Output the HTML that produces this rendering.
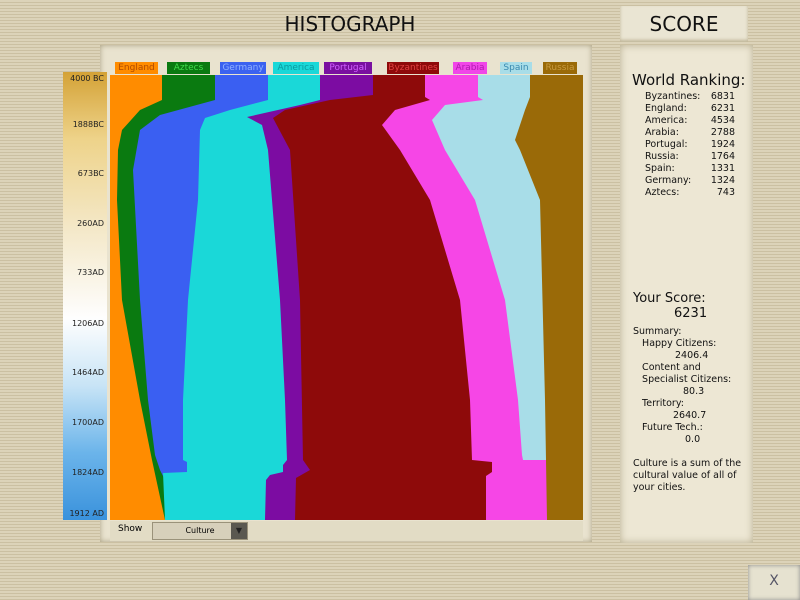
<!DOCTYPE html>
<html><head><style>
*{margin:0;padding:0;box-sizing:border-box}
body{width:800px;height:600px;overflow:hidden;position:relative;background:#d6ccb0;background-image:repeating-linear-gradient(0deg,#cbc0a2 0 1px,#dcd3b9 1px 3px);font-family:"DejaVu Sans","Liberation Sans",sans-serif}
.abs{position:absolute}
.title{left:240px;top:12px;width:220px;text-align:center;font-size:20px;color:#111}
.scorehd{left:620px;top:6px;width:128px;height:36px;background:#eae5d3;text-align:center;font-size:20px;line-height:36px;color:#111;box-shadow:inset 0 -2px 3px #bfb597}
.frame{left:100px;top:45px;width:492px;height:497px;background:#e9e3cf;box-shadow:inset 0 0 6px #a89e80}
.tl{left:63px;top:72px;width:44px;height:448px;background:linear-gradient(#d4a236 0%,#eed38a 15%,#f4e8c8 35%,#fefefe 55%,#c8e4f6 70%,#6bb4ea 85%,#3a92dc 100%)}
.tl span{position:absolute;right:3px;font-size:8px;color:#222}
.tab{position:absolute;top:62px;font-size:9px;height:12px;line-height:12px;width:43px;text-align:center;overflow:hidden;white-space:nowrap}
.rp{left:620px;top:45px;width:133px;height:498px;background:#ede7d4;box-shadow:inset 0 0 8px #b6ad8f;font-size:10px;color:#111}
.rk{position:absolute;left:25px;font-size:9.5px;width:90px}
.rk b{font-weight:normal;position:absolute;right:0}
.show{left:110px;top:521px;width:473px;height:20px;background:#e2dcc5}
.sel{left:152px;top:522px;width:96px;height:18px;background:#d7d0bb;border:1px solid #9a927a;font-size:8px;text-align:center;line-height:16px}
.x{left:748px;top:565px;width:52px;height:35px;background:#e6e2d0;box-shadow:inset 0 0 4px #888;text-align:center;line-height:32px;font-size:14px;color:#556}
</style></head><body>
<div class="abs title">HISTOGRAPH</div>
<div class="abs scorehd">SCORE</div>
<div class="abs frame"></div>
<div class="abs tl">
<span style="top:2px">4000 BC</span><span style="top:48px">1888BC</span><span style="top:97px">673BC</span><span style="top:147px">260AD</span><span style="top:196px">733AD</span><span style="top:247px">1206AD</span><span style="top:296px">1464AD</span><span style="top:346px">1700AD</span><span style="top:396px">1824AD</span><span style="top:437px">1912 AD</span>
</div>
<div class="tab" style="left:115px;background:#ff8c00;color:#b04a00">England</div>
<div class="tab" style="left:167px;background:#0a7a10;color:#3fdc4a">Aztecs</div>
<div class="tab" style="left:220px;background:#3b62f0;color:#8fb0ff;width:46px">Germany</div>
<div class="tab" style="left:273px;background:#1ad8d8;color:#0a9aa0;width:46px">America</div>
<div class="tab" style="left:324px;background:#7a10a0;color:#d060ff;width:48px">Portugal</div>
<div class="tab" style="left:387px;background:#8e0a0a;color:#e04040;width:52px">Byzantines</div>
<div class="tab" style="left:453px;background:#f046e8;color:#b01ab0;width:34px">Arabia</div>
<div class="tab" style="left:500px;background:#a8dde8;color:#3a8ab0;width:32px">Spain</div>
<div class="tab" style="left:543px;background:#9a6a08;color:#c89a40;width:34px">Russia</div>
<svg class="abs" style="left:0;top:0" width="800" height="600">
<rect x="110" y="75" width="473" height="445" fill="#ff8c00"/>
<polygon fill="#0a7a10" points="162,75 162,100 140,110 122,130 118,150 117,200 122,300 140,400 152,460 165,520 583,520 583,75"/>
<polygon fill="#3a5ff2" points="215,75 215,100 160,115 140,130 133,170 140,300 148,400 155,455 160,470 165,480 583,480 583,75"/>
<polygon fill="#1ad8d8" points="268,75 268,100 230,110 205,118 200,130 198,200 188,300 183,400 183,460 187,462 187,472 163,473 165,520 583,520 583,75"/>
<polygon fill="#7c0ca2" points="320,75 320,100 300,105 247,117 262,125 268,150 272,200 280,300 285,400 287,460 283,465 283,472 270,475 266,480 265,520 583,520 583,75"/>
<polygon fill="#8e0a0a" points="373,75 373,95 330,100 285,110 273,118 290,150 300,300 303,460 310,470 296,478 295,520 583,520 583,75"/>
<polygon fill="#f646e6" points="425,75 425,97 430,100 395,110 382,125 400,150 430,200 460,300 470,400 472,460 492,462 492,472 486,476 486,520 583,520 583,75"/>
<polygon fill="#a8dde8" points="478,75 478,97 483,100 445,105 432,120 445,150 475,200 505,300 518,400 522,455 523,460 583,460 583,75"/>
<polygon fill="#9a6a08" points="530,75 530,97 525,110 520,125 515,140 520,150 540,200 545,400 547,520 583,520 583,75"/>
</svg>
<div class="abs show"></div>
<div class="abs" style="left:118px;top:524px;font-size:9px">Show</div>
<div class="abs sel">Culture<span style="position:absolute;right:0;top:0;width:16px;height:16px;background:#5a5850;color:#222;font-size:8px;line-height:16px">▼</span></div>
<div class="abs rp">
<div style="position:absolute;left:12px;top:26px;font-size:15px">World Ranking:</div>
<div class="rk" style="top:46px">Byzantines:<b>6831</b></div>
<div class="rk" style="top:58px">England:<b>6231</b></div>
<div class="rk" style="top:70px">America:<b>4534</b></div>
<div class="rk" style="top:82px">Arabia:<b>2788</b></div>
<div class="rk" style="top:94px">Portugal:<b>1924</b></div>
<div class="rk" style="top:106px">Russia:<b>1764</b></div>
<div class="rk" style="top:118px">Spain:<b>1331</b></div>
<div class="rk" style="top:130px">Germany:<b>1324</b></div>
<div class="rk" style="top:142px">Aztecs:<b>743</b></div>
<div style="position:absolute;left:13px;top:246px;font-size:13px">Your Score:</div>
<div style="position:absolute;left:54px;top:261px;font-size:13px">6231</div>
<div style="position:absolute;left:13px;top:281px;line-height:12px;font-size:9.5px">Summary:<br>
&nbsp;&nbsp;&nbsp;Happy Citizens:<br>
<span style="padding-left:42px">2406.4</span><br>
&nbsp;&nbsp;&nbsp;Content and<br>
&nbsp;&nbsp;&nbsp;Specialist Citizens:<br>
<span style="padding-left:50px">80.3</span><br>
&nbsp;&nbsp;&nbsp;Territory:<br>
<span style="padding-left:40px">2640.7</span><br>
&nbsp;&nbsp;&nbsp;Future Tech.:<br>
<span style="padding-left:52px">0.0</span></div>
<div style="position:absolute;left:13px;top:413px;line-height:12px;font-size:9.5px">Culture is a sum of the<br>cultural value of all of<br>your cities.</div>
</div>
<div class="abs x">X</div>
</body></html>
